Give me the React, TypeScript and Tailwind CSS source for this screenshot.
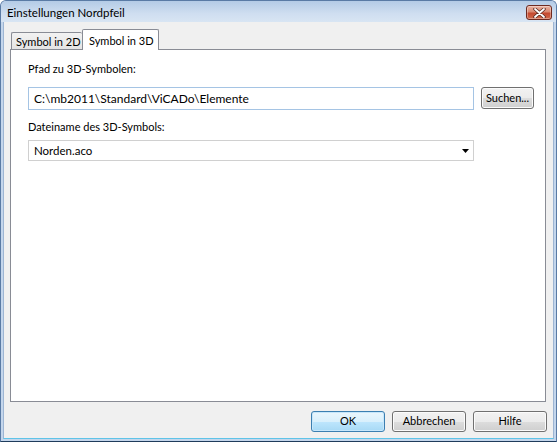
import React from "react";

const font = { fontFamily: 'Lato, "Liberation Sans", sans-serif' };

function Btn({ label, primary }: { label: string; primary?: boolean }) {
  return (
    <div
      className={
        "w-[74px] h-[21px] rounded-[3px] border flex items-center justify-center text-[11px] text-black whitespace-nowrap " +
        (primary
          ? "border-[#3c7fb1] bg-[linear-gradient(to_bottom,#eaf6fd_0%,#d9f0fc_50%,#bee6fd_51%,#a7d9f5_100%)] shadow-[inset_0_0_0_1px_#c7e7fb]"
          : "border-[#707070] bg-[linear-gradient(to_bottom,#f2f2f2_0%,#ebebeb_50%,#dddddd_51%,#cfcfcf_100%)] shadow-[inset_0_0_0_1px_#fbfbfb]")
      }
    >
      {label}
    </div>
  );
}

export default function App() {
  return (
    <div className="w-[557px] h-[442px] flex flex-col bg-[#c4d6ec] border border-[#5a7ba5] border-b-[#1f3c5c] rounded-t-[6px] overflow-hidden" style={font}>
      {/* title bar */}
      <div className="h-[21px] flex items-start bg-[linear-gradient(to_bottom,#b4cbe6,#cfdef0_60%,#d8e5f3)]">
        <span className="pl-[6px] pt-[5px] text-[11.5px] text-black leading-[14px] whitespace-nowrap">Einstellungen Nordpfeil</span>
        <div className="ml-auto mr-[4px] mt-[4px] w-[26px] h-[15px] rounded-[3px] border border-[#6e2a20] bg-[linear-gradient(to_bottom,#eab2a2_0%,#d98870_45%,#c5492f_55%,#d06a4c_100%)] flex items-center justify-center shadow-[inset_0_0_0_1px_rgba(255,255,255,0.35)]">
          <svg width="13" height="10" viewBox="0 0 13 10">
            <path d="M2 1 L11 9 M11 1 L2 9" stroke="#5a2a22" strokeWidth="3.4" strokeLinecap="round" fill="none" />
            <path d="M2 1 L11 9 M11 1 L2 9" stroke="#ffffff" strokeWidth="1.8" strokeLinecap="round" fill="none" />
          </svg>
        </div>
      </div>
      {/* body */}
      <div className="flex-1 mx-[2px] mb-[2px] bg-[#f0f0f0] flex flex-col pt-[7px] pl-[6px] pr-[6px] border-l border-r border-b border-[#9db5d3] border-b-[#5fc4e8]">
        {/* tabs */}
        <div className="h-[20px] flex items-end pl-[1px] relative z-10">
          <div className="w-[71px] h-[17px] border border-[#898c95] border-b-0 border-r-0 rounded-t-[2px] bg-[linear-gradient(to_bottom,#f2f2f2,#e4e4e4)] text-[11px] text-black flex items-center pl-[4px] pt-[2px] whitespace-nowrap overflow-hidden">
            Symbol in 2D
          </div>
          <div className="w-[77px] h-[21px] mb-[-1px] border border-[#898c95] border-b-0 rounded-t-[2px] bg-white text-[11px] text-black flex items-start pl-[6px] pt-[3px] whitespace-nowrap">
            Symbol in 3D
          </div>
        </div>
        {/* panel */}
        <div className="h-[353px] mr-[1px] border border-[#898c95] bg-white flex flex-col pl-[17px] pt-[12px]">
          <div className="text-[11px] text-black leading-[14px] whitespace-nowrap">Pfad zu 3D-Symbolen:</div>
          <div className="flex items-start mt-[11px]">
            <div className="w-[446px] h-[23px] border border-[#a5c4e4] bg-white flex items-center pl-[5px] text-[12px] text-black whitespace-nowrap">
              C:\mb2011\Standard\ViCADo\Elemente
            </div>
            <div className="ml-[7px] w-[53px] h-[22px] rounded-[3px] border border-[#707070] bg-[linear-gradient(to_bottom,#f2f2f2_0%,#ebebeb_50%,#dddddd_51%,#cfcfcf_100%)] shadow-[inset_0_0_0_1px_#fbfbfb] flex items-center justify-center text-[11px] text-black whitespace-nowrap">
              Suchen...
            </div>
          </div>
          <div className="text-[11px] text-black leading-[14px] mt-[10px] whitespace-nowrap">Dateiname des 3D-Symbols:</div>
          <div className="mt-[6px] w-[446px] h-[21px] border border-[#d0d0d0] bg-white flex items-center pl-[5px] pr-[4px] text-[11.5px] text-black whitespace-nowrap">
            <span className="flex-1">Norden.aco</span>
            <svg width="7" height="4" viewBox="0 0 7 4">
              <path d="M0 0 H7 L3.5 4 Z" fill="#000" />
            </svg>
          </div>
        </div>
        {/* buttons */}
        <div className="flex justify-end gap-[7px] mt-[9px]">
          <Btn label="OK" primary />
          <Btn label="Abbrechen" />
          <Btn label="Hilfe" />
        </div>
      </div>
    </div>
  );
}
